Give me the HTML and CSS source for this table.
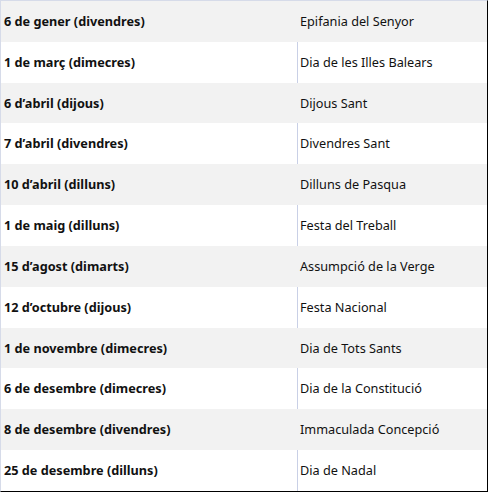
FILE: index.html
```html
<!DOCTYPE html>
<html lang="ca">
<head>
<meta charset="utf-8">
<link rel="stylesheet" href="styles.css">
</head>
<body>
<div class="table">
  <div class="row alt"><div class="date">6 de gener (divendres)</div><div class="name">Epifania del Senyor</div></div>
  <div class="row"><div class="date">1 de març (dimecres)</div><div class="name">Dia de les Illes Balears</div></div>
  <div class="row alt"><div class="date">6 d’abril (dijous)</div><div class="name">Dijous Sant</div></div>
  <div class="row"><div class="date">7 d’abril (divendres)</div><div class="name">Divendres Sant</div></div>
  <div class="row alt"><div class="date">10 d’abril (dilluns)</div><div class="name">Dilluns de Pasqua</div></div>
  <div class="row"><div class="date">1 de maig (dilluns)</div><div class="name">Festa del Treball</div></div>
  <div class="row alt"><div class="date">15 d’agost (dimarts)</div><div class="name">Assumpció de la Verge</div></div>
  <div class="row"><div class="date">12 d’octubre (dijous)</div><div class="name">Festa Nacional</div></div>
  <div class="row alt"><div class="date">1 de novembre (dimecres)</div><div class="name">Dia de Tots Sants</div></div>
  <div class="row"><div class="date">6 de desembre (dimecres)</div><div class="name">Dia de la Constitució</div></div>
  <div class="row alt"><div class="date">8 de desembre (divendres)</div><div class="name">Immaculada Concepció</div></div>
  <div class="row"><div class="date">25 de desembre (dilluns)</div><div class="name">Dia de Nadal</div></div>
</div>
</body>
</html>
```
FILE: styles.css
```css
html, body {
  margin: 0;
  padding: 0;
  background: #ffffff;
}
.table {
  width: 488px;
  height: 492px;
  box-sizing: border-box;
  border-top: 1px solid #d6dbe9;
  border-left: 1px solid #d6dbe9;
  border-right: 1px solid #000000;
  border-bottom: 1px solid #000000;
  display: grid;
  grid-template-rows: repeat(12, 1fr);
  font-family: "Noto Sans", "Open Sans", sans-serif;
  font-size: 12.7px;
  color: #111111;
}
.row {
  display: grid;
  grid-template-columns: 296px 1fr;
  align-items: stretch;
  background: #ffffff;
}
.row.alt {
  background: #f2f2f2;
}
.date, .name {
  display: flex;
  align-items: center;
  padding-bottom: 1px;
}
.date {
  padding-left: 3px;
  font-weight: 700;
}
.name {
  padding-left: 2px;
  border-left: 1px solid #c9d0e6;
}
.row.alt .name {
  border-left-color: #f2f2f2;
}
```
